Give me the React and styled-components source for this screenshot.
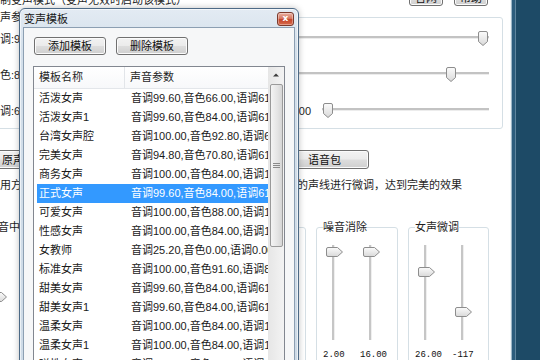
import React from 'react';
import styled, { createGlobalStyle } from 'styled-components';

const GlobalStyle = createGlobalStyle`
  html, body {
    margin: 0;
    padding: 0;
  }
  body {
    width: 540px;
    height: 360px;
    overflow: hidden;
    background: #1d4a66;
    font-family: "Liberation Sans", "Noto Sans CJK SC", sans-serif;
    font-size: 11px;
    color: #1e1e1e;
  }
`;

const Desktop = styled.div`
  position: relative;
  display: flex;
  width: 540px;
  height: 360px;
  overflow: hidden;
`;

const MainWindow = styled.div`
  flex: none;
  width: 510px;
  background: #fff;
  overflow: hidden;
`;

const WindowEdge = styled.div`
  flex: 1;
  background: linear-gradient(
    to right,
    #eef3f6 0 1px,
    #9cb5c6 1px 2px,
    #2c5c7c 2px 5px,
    #5f859e 5px 6px,
    #1d4a66 6px
  );
`;

const Content = styled.div`
  display: flex;
  flex-direction: column;
  margin-left: -22px;
  padding-right: 7px;
`;

const TopRow = styled.div`
  display: flex;
  align-items: flex-end;
  height: 16px;
  margin-top: -10px;
  padding-left: 11px;
`;

const Hint = styled.span`
  line-height: 12px;
  white-space: nowrap;
`;

const TopButtons = styled.div`
  display: flex;
  gap: 11px;
  margin-left: auto;
  margin-right: 15px;
`;

const WinButton = styled.button`
  flex: none;
  width: ${({ $w }) => $w}px;
  height: ${({ $h }) => $h || 18}px;
  padding: 0;
  border: 1px solid #707070;
  border-radius: 3px;
  background: linear-gradient(#f2f2f2 0%, #ebebeb 48%, #dddddd 52%, #cfcfcf 100%);
  box-shadow: inset 0 0 0 1px #fbfbfb;
  font: inherit;
  color: #111;
  line-height: 14px;
  white-space: nowrap;
`;

const Group = styled.fieldset`
  min-width: 0;
  margin: ${({ $mt }) => $mt || 0}px 0 0;
  padding: 0 ${({ $pr }) => $pr || 0}px ${({ $pb }) => $pb || 0}px ${({ $pl }) => $pl || 6}px;
  width: ${({ $w }) => ($w ? `${$w}px` : 'auto')};
  box-sizing: border-box;
  border: 1px solid #d5dfe5;
  border-radius: 3px;
  flex: none;
`;

const Legend = styled.legend`
  padding: 0;
  line-height: 14px;
  white-space: nowrap;
  color: #1e1e1e;
`;

const ParamRows = styled.div`
  display: flex;
  flex-direction: column;
  gap: 8px;
`;

const SliderRow = styled.div`
  display: flex;
  align-items: center;
  height: 28px;
`;

const RowLabel = styled.span`
  flex: none;
  width: 64px;
  white-space: nowrap;
`;

const RowNote = styled.span`
  flex: none;
  width: ${({ $w }) => $w}px;
  text-align: right;
  white-space: nowrap;
`;

const HTrack = styled.div`
  position: relative;
  flex: 1;
  height: 2px;
  margin-left: ${({ $ml }) => $ml || 0}px;
  margin-top: -2px;
  background: #c3c3c3;
  border-bottom: 1px solid #ececec;
`;

const HThumb = styled.svg`
  position: absolute;
  top: -5px;
  width: 10px;
  height: 15px;
`;

const ButtonRow = styled.div`
  display: flex;
  gap: 8px;
  margin-top: 21px;
  padding-left: 12px;
`;

const Tip = styled.div`
  margin-top: 9px;
  padding-left: 22px;
  line-height: 14px;
  white-space: nowrap;
`;

const GroupsRow = styled.div`
  display: flex;
  gap: 10px;
  margin-top: 28px;
  margin-left: 2px;
`;

const VSliders = styled.div`
  display: flex;
  padding-top: 11px;
  height: 160px;
`;

const VColumn = styled.div`
  display: flex;
  flex-direction: column;
  width: 37px;
  flex: none;
`;

const VTrack = styled.div`
  position: relative;
  width: 2px;
  height: 95px;
  margin-left: 9px;
  background: #c6c6c6;
  border-right: 1px solid #efefef;
`;

const VThumb = styled.svg`
  position: absolute;
  left: -6px;
  width: 17px;
  height: 10px;
`;

const VValue = styled.span`
  margin-top: 9px;
  font-family: "Liberation Mono", monospace;
  font-size: 9px;
  line-height: 12px;
  color: #111;
  white-space: nowrap;
`;

/* dialog */

const Dialog = styled.div`
  position: absolute;
  left: 19px;
  top: 8px;
  width: 280px;
  height: 380px;
  box-sizing: border-box;
  display: flex;
  flex-direction: column;
  padding: 0 3px;
  border: 1px solid #4d6a86;
  border-radius: 6px 6px 0 0;
  background: linear-gradient(#e3ebf3, #d3dfea 40px, #cddae6);
  box-shadow: 0 0 6px rgba(0, 0, 0, 0.25), inset 0 0 0 1px rgba(255, 255, 255, 0.6);
`;

const TitleBar = styled.div`
  display: flex;
  align-items: center;
  justify-content: space-between;
  height: 21px;
  padding-left: 1px;
`;

const Title = styled.span`
  font-size: 11px;
  color: #151515;
`;

const CloseButton = styled.div`
  display: flex;
  align-items: center;
  justify-content: center;
  width: 17px;
  height: 14px;
  margin-right: 1px;
  margin-top: 1px;
  box-sizing: border-box;
  border: 1px solid #7c3a2c;
  border-radius: 3px;
  background: linear-gradient(#eab0a2 0%, #d77a63 45%, #c4452b 55%, #d76b4c 100%);
  box-shadow: inset 0 0 0 1px rgba(255, 255, 255, 0.35);
  color: #fff;
  font-family: "DejaVu Sans", sans-serif;
  font-size: 9px;
  font-weight: bold;
  line-height: 1;
`;

const Client = styled.div`
  flex: 1;
  display: flex;
  flex-direction: column;
  padding: 9px 0 0 10px;
  border: 1px solid #8c9fb2;
  background: #f6f7f8;
`;

const DialogButtons = styled.div`
  display: flex;
  gap: 10px;
`;

const ListView = styled.div`
  display: flex;
  width: 252px;
  height: 320px;
  box-sizing: border-box;
  margin: 11px 0 0 -1px;
  border: 1px solid #828790;
  background: #fff;
`;

const ListMain = styled.div`
  flex: 1;
  min-width: 0;
  overflow: hidden;
`;

const Header = styled.div`
  display: flex;
  height: 21px;
  border-bottom: 1px solid #e3e6ea;
  background: linear-gradient(#ffffff, #f7f8fa);
`;

const HeaderCell = styled.div`
  flex: none;
  width: ${({ $w }) => ($w ? `${$w}px` : 'auto')};
  padding-left: ${({ $pl }) => $pl}px;
  box-sizing: border-box;
  line-height: 21px;
  white-space: nowrap;
  border-right: ${({ $sep }) => ($sep ? '1px solid #e2e5e9' : 'none')};
  color: #1f1f1f;
`;

const Row = styled.div`
  display: flex;
  height: 19px;
  margin-left: 3px;
  line-height: 19px;
  white-space: nowrap;
  background: ${({ $selected }) => ($selected ? '#3399ff' : 'transparent')};
  color: ${({ $selected }) => ($selected ? '#fff' : '#1a1a1a')};
`;

const NameCell = styled.span`
  flex: none;
  width: 88px;
  padding-left: 2px;
  box-sizing: border-box;
`;

const ValueCell = styled.span`
  padding-left: 6px;
`;

const ScrollBar = styled.div`
  flex: none;
  width: 16px;
  display: flex;
  flex-direction: column;
  align-items: center;
  background: linear-gradient(to right, #e6e6e6, #f3f3f3);
`;

const ScrollArrow = styled.svg`
  flex: none;
  width: 16px;
  height: 17px;
`;

const ScrollThumb = styled.div`
  display: flex;
  align-items: center;
  justify-content: center;
  width: 13px;
  height: 163px;
  box-sizing: border-box;
  border: 1px solid #9a9a9a;
  border-radius: 2px;
  background: linear-gradient(to right, #f4f4f4, #e4e4e4 60%, #d6d6d6);
`;

const Grip = styled.svg`
  width: 7px;
  height: 7px;
`;

const templates = [
  ['活泼女声', '音调99.60,音色66.00,语调61.20,语速1.00'],
  ['活泼女声1', '音调99.60,音色84.00,语调61.20,语速1.00'],
  ['台湾女声腔', '音调100.00,音色92.80,语调64.00,语速1.00'],
  ['完美女声', '音调94.80,音色70.80,语调61.20,语速1.00'],
  ['商务女声', '音调100.00,音色84.00,语调12.00,语速1.00'],
  ['正式女声', '音调99.60,音色84.00,语调61.20,语速1.00'],
  ['可爱女声', '音调100.00,音色88.00,语调12.00,语速1.00'],
  ['性感女声', '音调100.00,音色84.00,语调12.00,语速1.00'],
  ['女教师', '音调25.20,音色0.00,语调0.00,语速1.00'],
  ['标准女声', '音调100.00,音色91.60,语调80.00,语速1.00'],
  ['甜美女声', '音调99.60,音色84.00,语调61.20,语速1.00'],
  ['甜美女声1', '音调99.60,音色84.00,语调61.20,语速1.00'],
  ['温柔女声', '音调100.00,音色84.00,语调12.00,语速1.00'],
  ['温柔女声1', '音调100.00,音色84.00,语调12.00,语速1.00'],
  ['磁性女声', '音调100.00,音色80.00,语调12.00,语速1.00']
];

const params = [
  { label: '音调:99.60', pos: 0.987 },
  { label: '音色:84.00', pos: 0.912 },
  { label: '语调:61.20', note: '语速:1.00', noteW: 258, ml: 11, pos: 0.033 }
];

const GradDefs = ({ id }) => (
  <defs>
    <linearGradient id={id} x1="0" y1="0" x2="0" y2="1">
      <stop offset="0" stopColor="#fbfbfb" />
      <stop offset="1" stopColor="#d9d9d9" />
    </linearGradient>
  </defs>
);

const DownThumb = ({ pos }) => (
  <HThumb viewBox="0 0 10 15" style={{ left: `calc(${pos * 100}% - 5px)` }}>
    <GradDefs id="hthumb" />
    <path d="M0.5 2 Q0.5 0.5 2 0.5 H8 Q9.5 0.5 9.5 2 V10.5 L5 14.5 L0.5 10.5 Z" fill="url(#hthumb)" stroke="#8d8d8d" />
  </HThumb>
);

const RightThumb = ({ top }) => (
  <VThumb viewBox="0 0 17 10" style={{ top }}>
    <GradDefs id="vthumb" />
    <path d="M2 0.5 H11.5 L16.5 5 L11.5 9.5 H2 Q0.5 9.5 0.5 8 V2 Q0.5 0.5 2 0.5 Z" fill="url(#vthumb)" stroke="#8d8d8d" />
  </VThumb>
);

const VSlider = ({ pos, value }) => (
  <VColumn>
    <VTrack>
      <RightThumb top={Math.round(pos * 85)} />
    </VTrack>
    {value && <VValue>{value}</VValue>}
  </VColumn>
);

const App = () => (
  <Desktop>
    <GlobalStyle />
    <MainWindow>
      <Content>
        <TopRow>
          <Hint>强制变声模式（变声无效时启动该模式）</Hint>
          <TopButtons>
            <WinButton $w={34} $h={16}>官网</WinButton>
            <WinButton $w={34} $h={16}>帮助</WinButton>
          </TopButtons>
        </TopRow>

        <Group $mt={4} $pl={10} $pr={13} $pb={4}>
          <Legend>变声参数</Legend>
          <ParamRows>
            {params.map(p => (
              <SliderRow key={p.label}>
                <RowLabel>{p.label}</RowLabel>
                {p.note && <RowNote $w={p.noteW}>{p.note}</RowNote>}
                <HTrack $ml={p.ml}>
                  <DownThumb pos={p.pos} />
                </HTrack>
              </SliderRow>
            ))}
          </ParamRows>
        </Group>

        <ButtonRow>
          <WinButton $w={46} $h={19}>原声</WinButton>
          <WinButton $w={110} $h={19}>男声</WinButton>
          <WinButton $w={110} $h={19}>女声</WinButton>
          <WinButton $w={89} $h={19}>语音包</WinButton>
        </ButtonRow>

        <Tip>用方法：先在变声模板列表中选择一个模板后，可以对该模板的声线进行微调，达到完美的效果</Tip>

        <GroupsRow>
          <Group $w={326}>
            <Legend>混音中心</Legend>
            <VSliders>
              <VSlider pos={0.553} />
            </VSliders>
          </Group>
          <Group $w={82}>
            <Legend>噪音消除</Legend>
            <VSliders>
              <VSlider pos={0.024} value="2.00" />
              <VSlider pos={0.024} value="16.00" />
            </VSliders>
          </Group>
          <Group $w={81}>
            <Legend>女声微调</Legend>
            <VSliders>
              <VSlider pos={0.259} value="26.00" />
              <VSlider pos={0.729} value="-117" />
            </VSliders>
          </Group>
        </GroupsRow>
      </Content>
    </MainWindow>
    <WindowEdge />

    <Dialog>
      <TitleBar>
        <Title>变声模板</Title>
        <CloseButton>x</CloseButton>
      </TitleBar>
      <Client>
        <DialogButtons>
          <WinButton $w={72}>添加模板</WinButton>
          <WinButton $w={72}>删除模板</WinButton>
        </DialogButtons>
        <ListView>
          <ListMain>
            <Header>
              <HeaderCell $w={91} $pl={5} $sep>模板名称</HeaderCell>
              <HeaderCell $pl={5}>声音参数</HeaderCell>
            </Header>
            {templates.map(([name, value], i) => (
              <Row key={name} $selected={i === 5}>
                <NameCell>{name}</NameCell>
                <ValueCell>{value}</ValueCell>
              </Row>
            ))}
          </ListMain>
          <ScrollBar>
            <ScrollArrow viewBox="0 0 16 17">
              <path d="M5 9.5 L8 6.5 L11 9.5 Z" fill="#3c3c3c" />
            </ScrollArrow>
            <ScrollThumb>
              <Grip viewBox="0 0 7 7">
                <path d="M0 1.5 H7 M0 3.5 H7 M0 5.5 H7" stroke="#8a8a8a" strokeWidth="1" />
              </Grip>
            </ScrollThumb>
          </ScrollBar>
        </ListView>
      </Client>
    </Dialog>
  </Desktop>
);

export default App;
